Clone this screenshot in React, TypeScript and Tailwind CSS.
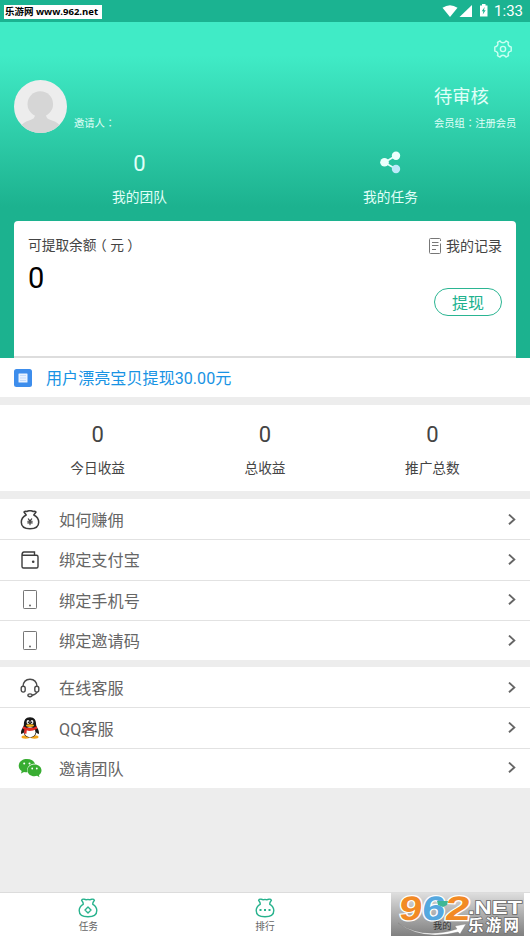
import React from 'react'

// ── Types ──────────────────────────────────────────────────────────────────────

interface MenuItem {
  label: string
  icon: React.ReactNode
}

// ── Icons ──────────────────────────────────────────────────────────────────────

function StatusIcons() {
  return (
    <svg width="50" height="22" viewBox="0 0 50 22" fill="#fff">
      <path d="M.5 7.800Q8 2.500 15.500 7.800L8 17z" />
      <path d="M30 5v12H17.500z" />
      <path d="M38 5.500h2V4h3.500v1.500h2V16.500H38z" />
      <path d="M42.700 7l-3 4.200h1.700l-.7 3.300 3-4.300H42z" fill="#1bb391" />
    </svg>
  )
}

function GearIcon() {
  return (
    <svg width="18" height="18" viewBox="0 0 18 18" fill="none" stroke="#c9fff1" strokeWidth="1.400" strokeLinejoin="round">
      <path d="M6 .9Q7 2.800 9 2.800T12 .9L14.500 2.400Q13.700 4.300 14.600 5.500T17.200 6.900V11.100Q15.500 11.200 14.600 12.500T14.500 15.600L12 17.100Q11 15.200 9 15.200T6 17.100L3.500 15.600Q4.300 13.700 3.400 12.500T.8 11.100V6.900Q2.500 6.800 3.400 5.500T3.500 2.400z" />
      <circle cx="9" cy="9" r="2.600" />
    </svg>
  )
}

function Avatar() {
  return (
    <svg width="53" height="53" viewBox="0 0 53 53">
      <clipPath id="avatar"><circle cx="26.500" cy="26.500" r="26.500" /></clipPath>
      <g clipPath="url(#avatar)">
        <path d="M0 0h53v53H0z" fill="#ededed" />
        <path d="M21 32h11v3q0 4 6 5.500 6 1.500 9 6.500l-5 7H11l-5-7q3-5 9-6.500 6-1.500 6-5.500z" fill="#d6d6d6" />
        <circle cx="26.300" cy="24" r="12.800" fill="#d6d6d6" />
      </g>
    </svg>
  )
}

function ShareIcon() {
  return (
    <svg width="22" height="23" viewBox="0 0 22 23">
      <path d="M16 4.500L4.500 11.500 16 18" stroke="#e6fffa" strokeWidth="1.700" fill="none" />
      <circle cx="16" cy="4.800" r="4.200" fill="#ecfffc" />
      <circle cx="4.500" cy="11.300" r="4.300" fill="#ecfffc" />
      <circle cx="16" cy="18" r="4.200" fill="#bdeafa" />
    </svg>
  )
}

function RecordIcon() {
  return (
    <svg width="14" height="16" viewBox="0 0 14 16" fill="none" stroke="#777" strokeWidth="1">
      <path d="M12.500 3V1.500q0-1-1-1h-9q-1 0-1 1v13q0 1 1 1h9q1 0 1-1V5.500M4 4.500h6.500M4 7.500h6.500M4 11.500h4" />
    </svg>
  )
}

function NoticeIcon() {
  return (
    <svg width="18" height="18" viewBox="0 0 18 18">
      <rect width="18" height="18" rx="2.500" fill="#3d8dec" />
      <rect x="4.500" y="4.500" width="9" height="9" rx=".5" fill="#e8f2ff" />
      <path d="M6 6.500h6M6 9h6M6 11.500h6" stroke="#b5d2fa" strokeWidth=".7" />
    </svg>
  )
}

function MoneyBagIcon() {
  return (
    <svg width="20" height="20" viewBox="0 0 20 20" fill="none" stroke="#3d3d3d" strokeWidth="1.500" strokeLinejoin="round" strokeLinecap="round">
      <path d="M6.200 5L4 2Q5 1 6.800 1.500 8.500.5 10 .8q1.500-.3 3.200.7 1.800-.5 2.800.5L13.800 5Q18.700 7.500 18.700 12.300q0 6.500-8.700 6.500T1.300 12.300Q1.300 7.500 6.200 5z" />
      <path d="M8.300 8.800L10 10.800l1.700-2M7.800 11.200h4.400M7.800 12.900h4.400M10 11v3.700" strokeWidth="1.100" />
    </svg>
  )
}

function WalletIcon() {
  return (
    <svg width="18" height="18" viewBox="0 0 18 18" fill="none" stroke="#3d3d3d" strokeWidth="1.400">
      <path d="M1 4.300v11.200q0 1.500 1.500 1.500h13q1.500 0 1.500-1.500V5.800q0-1.500-1.500-1.500zM1 4.500Q1 1 3 1h10.500v3" />
      <circle cx="12.200" cy="10.800" r="1.300" fill="#3d3d3d" stroke="none" />
    </svg>
  )
}

function PhoneIcon() {
  return (
    <svg width="14" height="20" viewBox="0 0 14 20" fill="none" stroke="#777" strokeWidth="1">
      <rect x=".5" y=".5" width="13" height="18" rx=".7" />
      <circle cx="7" cy="15.500" r=".9" fill="#555" stroke="none" />
    </svg>
  )
}

function HeadsetIcon() {
  return (
    <svg width="20" height="20" viewBox="0 0 20 20" fill="none" stroke="#4b4b4b" strokeWidth="1.400">
      <path d="M3 8.500Q3.500 1.300 10 1.300t7 7.200M17.200 14q-1.200 2.600-5.200 3.200" />
      <rect x="1.200" y="8.300" width="4" height="5.800" rx="2" />
      <rect x="14.800" y="8.300" width="4" height="5.800" rx="2" />
      <ellipse cx="10" cy="17.300" rx="2.100" ry="1.400" />
    </svg>
  )
}

function QQIcon() {
  return (
    <svg width="20" height="22" viewBox="0 0 20 22">
      <ellipse cx="5.500" cy="20" rx="4" ry="1.700" fill="#f3a51c" />
      <ellipse cx="14.500" cy="20" rx="4" ry="1.700" fill="#f3a51c" />
      <path d="M10 .3C5.500.3 3.800 3.500 3.900 7.500 3.800 10 1 12 1 16q.2 2 2.500-.5Q5 20.500 10 20.500t6.500-5Q18.800 18 19 16c0-4-2.800-6-2.900-8.500C16.200 3.500 14.500.3 10 .3z" fill="#171717" />
      <ellipse cx="10" cy="15.300" rx="5.500" ry="5" fill="#fff" />
      <path d="M3.300 9.200Q10 13 16.700 9.200l.6 2.500Q10 15.500 6.800 13.300l-.4 3.500-2.400-.4.400-3.800-1.800-1z" fill="#e32c25" />
      <ellipse cx="8" cy="5" rx="1.400" ry="2" fill="#fff" />
      <ellipse cx="12" cy="5" rx="1.400" ry="2" fill="#fff" />
      <circle cx="8.400" cy="5.200" r=".7" />
      <circle cx="11.600" cy="5.200" r=".7" />
      <ellipse cx="10" cy="8.600" rx="4" ry="1.300" fill="#f8b11a" />
    </svg>
  )
}

function WechatIcon() {
  return (
    <svg width="24" height="20" viewBox="0 0 24 20" fill="#38ad32">
      <path d="M9 1C4 1 .7 4 .7 7.800c0 2.300 1.100 4 3 5.200L3 15.400l3-1.500q1.500.5 3.500.4C8 9 12 5.500 17 5.700 16 2.800 13 1 9 1z" />
      <path d="M16.500 6.500c-4 0-7 2.600-7 5.900s3 5.800 7 5.800q1.500 0 2.600-.4l2.400 1.400-.6-2.200c1.700-1.200 2.600-2.800 2.600-4.600 0-3.300-3-5.900-7-5.900z" />
      <g fill="#fff">
        <circle cx="6.200" cy="5.500" r="1" />
        <circle cx="11.500" cy="5.500" r="1" />
        <circle cx="14.200" cy="10.500" r=".9" />
        <circle cx="18.800" cy="10.500" r=".9" />
      </g>
    </svg>
  )
}

function ChevronIcon() {
  return (
    <svg width="8" height="12" viewBox="0 0 8 12" fill="none" stroke="#666" strokeWidth="1.900">
      <path d="M1 .6l5.300 4.800L1 10.200" />
    </svg>
  )
}

function TabBagIcon({ children }: { children?: React.ReactNode }) {
  return (
    <svg width="20" height="20" viewBox="0 0 20 20" fill="none" stroke="#27b28d" strokeWidth="1.400" strokeLinejoin="round">
      <path d="M5.200 6.300Q5.500 4.500 3.600 2.200 4.300.8 6 1.200q2 .9 4 .2 2 .7 4-.2 1.700-.4 2.400 1Q14.500 4.500 14.800 6.300 18.800 8.500 18.800 12.500q0 6.300-8.800 6.300t-8.800-6.300Q1.200 8.500 5.200 6.300z" />
      {children}
    </svg>
  )
}

// ── Data ───────────────────────────────────────────────────────────────────────

const stats = [
  { label: '今日收益', value: 0 },
  { label: '总收益', value: 0 },
  { label: '推广总数', value: 0 },
]

const accountItems: MenuItem[] = [
  { label: '如何赚佣', icon: <MoneyBagIcon /> },
  { label: '绑定支付宝', icon: <WalletIcon /> },
  { label: '绑定手机号', icon: <PhoneIcon /> },
  { label: '绑定邀请码', icon: <PhoneIcon /> },
]

const serviceItems: MenuItem[] = [
  { label: '在线客服', icon: <HeadsetIcon /> },
  { label: 'QQ客服', icon: <QQIcon /> },
  { label: '邀请团队', icon: <WechatIcon /> },
]

// ── Sections ───────────────────────────────────────────────────────────────────

// The TC face centres full-width punctuation in its cell
function Punct({ children }: { children: React.ReactNode }) {
  return <span className="font-['Noto_Sans_CJK_TC',sans-serif]">{children}</span>
}

// Brackets keep only half their cell, centred in a full one
function Bracket({ children }: { children: React.ReactNode }) {
  return <span className="inline-block w-[13.700px] text-center [font-feature-settings:'halt']">{children}</span>
}

function MenuList({ items }: { items: MenuItem[] }) {
  return (
    <div className="bg-white">
      {items.map(({ label, icon }) => (
        <div key={label} className="flex h-[40.300px] items-center border-t border-[#e2e2e2] pr-[14px] first:border-white">
          <span className="flex w-[59px] justify-center">{icon}</span>
          <span className="flex-1 pt-[3px] text-[16.200px] text-[#666]">{label}</span>
          <ChevronIcon />
        </div>
      ))}
    </div>
  )
}

function Watermark() {
  return (
    <div className="absolute left-[391px] top-0 h-[43px] w-[133px] bg-linear-to-b from-[#dedede] to-[#808080]">
      <svg width="133" height="43" viewBox="0 0 133 43" className="absolute inset-0 overflow-visible">
        <path d="M7 30Q32 47 66 36l-2-3 11-2-6 10-2-2Q31 48 7 30z" fill="#fff" stroke="#777" strokeWidth=".3" />
        <text x="42" y="36" fontSize="9.200" fill="#333">我的</text>
        <g transform="translate(4 0) skewX(-6)" fontFamily="Liberation Sans, sans-serif" fontWeight="700" fontSize="34" strokeWidth="2.400" paintOrder="stroke">
          <text x="6" y="27" fill="#f28a25" stroke="#fff" textLength="23" lengthAdjust="spacingAndGlyphs">9</text>
          <text x="29" y="27" fill="#55a8df" stroke="#fff" textLength="23" lengthAdjust="spacingAndGlyphs">6</text>
          <text x="52" y="27" fill="#f28a25" stroke="#fff" textLength="25" lengthAdjust="spacingAndGlyphs">2</text>
        </g>
        <path d="M46 8h11l-1 4-4 2-5-2z" fill="#3eb795" />
        <g fill="#fff" stroke="#686868" strokeWidth="1.400" paintOrder="stroke" fontWeight="700">
          <text x="77" y="21" fontFamily="Liberation Sans, sans-serif" fontSize="18" textLength="54" lengthAdjust="spacingAndGlyphs">.NET</text>
          <text x="77" y="38" fontSize="15.500" textLength="51">乐游网</text>
        </g>
      </svg>
    </div>
  )
}

// ── Page ───────────────────────────────────────────────────────────────────────

export default function App() {
  return (
    <div className="flex h-[942px] w-[530px] flex-col overflow-hidden bg-[#ededed] font-[Roboto,'Noto_Sans_CJK_SC',sans-serif] leading-none text-[#444]">
      {/* Status bar */}
      <div className="flex h-[22px] shrink-0 items-start justify-between bg-[#1bb391] pl-1 pr-[7px] text-white">
        <span className="mt-[5px] flex h-[14px] w-[98px] items-center whitespace-nowrap bg-white pl-px font-['Open_Sans','Noto_Sans_CJK_SC',sans-serif] text-[9.500px] font-bold text-black">乐游网 www.962.net</span>
        <div className="flex h-[22px] items-center gap-0.5">
          <StatusIcons />
          <span className="text-[15px]">1:33</span>
        </div>
      </div>

      {/* Profile header */}
      <div className="flex h-[336px] shrink-0 flex-col bg-linear-to-b from-[#40ebc6] from-10% to-[#1cb28f] to-55% px-[14px] text-[#e0fff8]">
        <div className="flex h-[58px] justify-end pr-[4px] pt-[18px]"><GearIcon /></div>
        <div className="flex h-[53px]">
          <Avatar />
          <span className="ml-[7px] mt-[38px] text-[10.300px]">邀请人<Punct>：</Punct></span>
          <div className="ml-auto w-[82px] whitespace-nowrap">
            <p className="mt-[8px] text-[18.300px]">待审核</p>
            <p className="mt-[12px] text-[10.300px]">会员组<Punct>：</Punct>注册会员</p>
          </div>
        </div>
        <div className="grid h-[88px] grid-cols-2 text-center text-[13.700px]">
          <div>
            <p className="mt-[20px] text-[22px]">0</p>
            <p className="mt-[16px]">我的团队</p>
          </div>
          <div className="flex flex-col items-center">
            <span className="mt-[18px]"><ShareIcon /></span>
            <p className="mt-[17px]">我的任务</p>
          </div>
        </div>

        {/* Balance card */}
        <div className="flex flex-1 justify-between rounded-t-[4px] border-b-2 border-[#ddd] bg-white px-[14px] text-[#444]">
          <div>
            <p className="mt-[18px] text-[13.700px]">可提取余额<Bracket>（</Bracket>元<Bracket>）</Bracket></p>
            <p className="mt-[11px] text-[29px] text-black">0</p>
          </div>
          <div className="flex flex-col items-end">
            <div className="mt-[17px] flex items-center gap-1 text-[14px]"><RecordIcon />我的记录</div>
            <button className="mt-[34px] flex h-[28px] w-[68px] items-center justify-center rounded-full border border-[#2bb592] pt-[3px] text-[16px] text-[#20b28e]">提现</button>
          </div>
        </div>
      </div>

      {/* Notice */}
      <div className="flex h-[39px] shrink-0 items-center bg-white pl-[14px] text-[16.100px] text-[#1893e4]">
        <NoticeIcon />
        <span className="ml-[14px] pt-[3px]">用户漂亮宝贝提现30.00元</span>
      </div>

      {/* Earnings */}
      <div className="mt-2 grid h-[86px] shrink-0 grid-cols-3 bg-white px-[14px] text-center">
        {stats.map(({ label, value }) => (
          <div key={label}>
            <p className="mt-[19px] text-[22px]">{value}</p>
            <p className="mt-[16px] text-[13.700px]">{label}</p>
          </div>
        ))}
      </div>

      <div className="mt-2"><MenuList items={accountItems} /></div>
      <div className="mt-[7px]"><MenuList items={serviceItems} /></div>

      {/* Tab bar */}
      <div className="relative mt-auto grid h-[50px] shrink-0 grid-cols-3 border-t border-[#dcdcdc] bg-white text-[9.700px] text-[#666]">
        <div className="flex flex-col items-center gap-[4px] pt-[5px]">
          <TabBagIcon><path d="M10 9l3 3-3 3-3-3z" /></TabBagIcon>
          任务
        </div>
        <div className="flex flex-col items-center gap-[4px] pt-[5px]">
          <TabBagIcon><path d="M4.500 12h2M9 12h2M13.500 12h2" strokeWidth="1.800" /></TabBagIcon>
          排行
        </div>
        <Watermark />
      </div>
    </div>
  )
}
